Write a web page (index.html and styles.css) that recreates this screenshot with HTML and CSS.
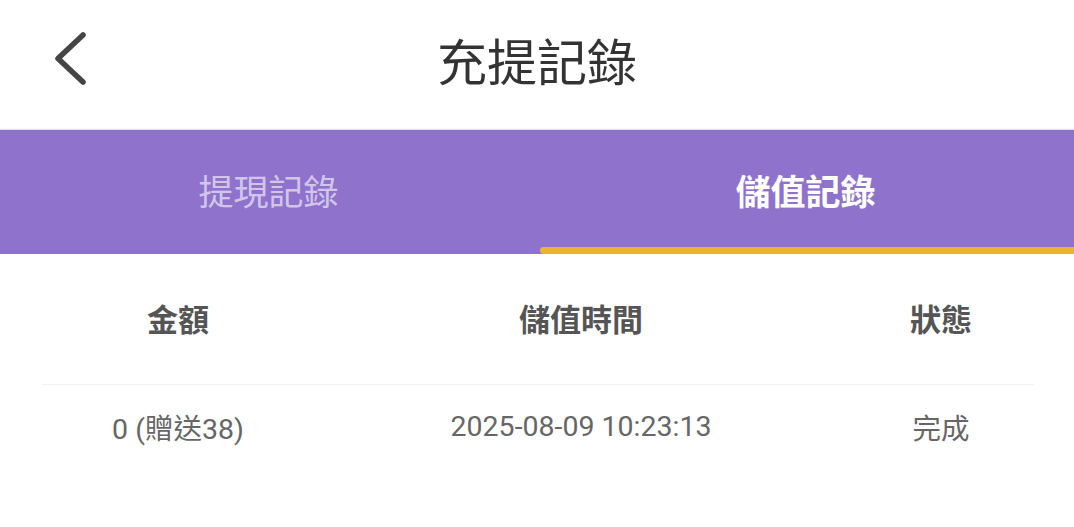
FILE: index.html
```html
<!DOCTYPE html>
<html lang="zh-Hant">
<head>
<meta charset="utf-8">
<title>充提記錄</title>
<link rel="stylesheet" href="styles.css">
</head>
<body>
<div class="page">
  <header class="topbar">
    <button class="back" aria-label="返回">
      <svg width="50" height="70" viewBox="0 0 50 70">
        <path d="M40 15 L15 38.5 L40 62" fill="none" stroke="#454545" stroke-width="5.5" stroke-linecap="round" stroke-linejoin="round"/>
      </svg>
    </button>
    <h1 class="title">充提記錄</h1>
  </header>
  <nav class="tabs">
    <div class="tab">提現記錄</div>
    <div class="tab active">儲值記錄</div>
  </nav>
  <section class="table">
    <div class="row head">
      <div class="cell">金額</div>
      <div class="cell">儲值時間</div>
      <div class="cell">狀態</div>
    </div>
    <div class="row body">
      <div class="cell">0 (贈送38)</div>
      <div class="cell">2025-08-09 10:23:13</div>
      <div class="cell">完成</div>
    </div>
  </section>
</div>
</body>
</html>
```

FILE: styles.css
```css
* { box-sizing: border-box; }
html, body { margin: 0; padding: 0; background: #ffffff; }
body {
  font-family: Roboto, "Noto Sans CJK TC", "Noto Sans", sans-serif;
  width: 1074px;
  overflow: hidden;
}
.page { width: 1074px; }

.topbar {
  position: relative;
  height: 130px;
  display: flex;
  align-items: center;
  justify-content: center;
}
.back {
  position: absolute;
  left: 43px;
  top: 20px;
  padding: 0;
  margin: 0;
  border: 0;
  background: none;
  width: 50px;
  height: 70px;
}
.back svg { display: block; }
.title {
  margin: 0;
  margin-top: -12px;
  font-family: "Noto Sans CJK TC", sans-serif;
  font-weight: 400;
  font-size: 50px;
  line-height: 60px;
  color: #333333;
}

.tabs {
  display: flex;
  height: 124px;
  background: #8e72cc;
  box-shadow: 0 -1px 1px rgba(0,0,0,0.12);
}
.tab {
  position: relative;
  flex: 1;
  display: flex;
  align-items: center;
  justify-content: center;
  padding-bottom: 6px;
  font-family: "Noto Sans CJK TC", sans-serif;
  font-size: 35px;
  color: rgba(255,255,255,0.62);
}
.tab.active {
  color: #ffffff;
  font-weight: 700;
}
.tab.active::after {
  content: "";
  position: absolute;
  left: 3px;
  right: -6px;
  bottom: 0;
  height: 7px;
  border-radius: 4px;
  background: #e9b52f;
}

.table { margin: 0 40px 0 42px; }
.row {
  display: grid;
  grid-template-columns: 272px 534px 1fr;
  align-items: center;
  text-align: center;
}
.row.head {
  height: 131px;
  border-bottom: 1px solid #f0f0f0;
  font-family: "Noto Sans CJK TC", sans-serif;
  font-weight: 700;
  font-size: 31px;
  color: #555555;
}
.row.head .cell { padding-bottom: 4px; }
.row.body {
  height: 82px;
  font-size: 28.5px;
  color: #666666;
}
```
